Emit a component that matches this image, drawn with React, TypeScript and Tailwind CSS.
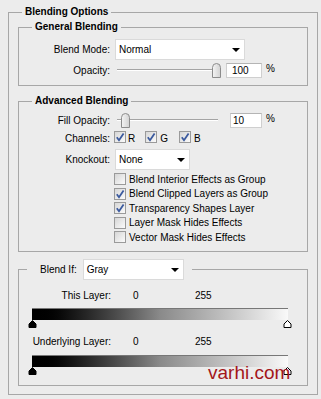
import React from "react";

// Photoshop-style "Blending Options" panel, grouped in etched fieldsets.

const FONT = "font-['Liberation_Sans',Arial,sans-serif]";

function Check({ on }: { on?: boolean }) {
  return (
    <span className="inline-flex h-[12px] w-[12px] shrink-0 items-center justify-center border border-[#9a9a9a] bg-linear-to-br from-[#d6d6d6] to-[#fbfbfb]">
      {on ? (
        <svg width="10" height="10" viewBox="0 0 10 10">
          <path d="M1.8 5.2 L4 8.2 L8.6 1.6" fill="none" stroke="#3b5a9e" strokeWidth="1.8" />
        </svg>
      ) : null}
    </span>
  );
}

function Select({ value, w }: { value: string; w: string }) {
  return (
    <div className={`relative flex h-[21px] items-center border border-[#dadada] bg-white pl-[3px] ${w}`}>
      <span>{value}</span>
      <svg className="absolute right-[4px] top-[8px]" width="8" height="4" viewBox="0 0 8 4">
        <path d="M0 0 H8 L4 4 Z" fill="#000" />
      </svg>
    </div>
  );
}

function Thumb({ left }: { left: string }) {
  return (
    <svg className={`absolute top-0 ${left}`} width="9" height="15" viewBox="0 0 9 15">
      <defs>
        <linearGradient id="tg" x1="0" x2="1" y1="0" y2="0">
          <stop offset="0" stopColor="#f4f4f4" />
          <stop offset="1" stopColor="#d2d2d2" />
        </linearGradient>
      </defs>
      <path d="M0.5 4.5 Q0.5 0.5 4.5 0.5 Q8.5 0.5 8.5 4.5 V14.5 H0.5 Z" fill="url(#tg)" stroke="#8c8c8c" />
    </svg>
  );
}

function Slider({ thumb }: { thumb: string }) {
  return (
    <div className="relative ml-[7px] h-[15px] w-[104px]">
      <div className="absolute left-0 top-[6px] h-[1px] w-[101px] bg-[#a4a4a4]" />
      <div className="absolute left-0 top-[7px] h-[1px] w-[101px] bg-white" />
      <Thumb left={thumb} />
    </div>
  );
}

function Marker({ dark, left }: { dark?: boolean; left: string }) {
  return (
    <svg className={`absolute top-0 ${left}`} width="9" height="8" viewBox="0 0 9 8">
      <path
        d="M4.5 0.5 L8 4 V7.5 H1 V4 Z"
        fill={dark ? "#000" : "#fff"}
        stroke="#000"
        strokeWidth="1"
      />
    </svg>
  );
}

function Ramp() {
  return (
    <>
      <div className="ml-[13px] h-[12px] w-[256px] border-t border-[#777] bg-linear-to-r from-black via-[#8a8a8a] to-[#f9f9f9]" />
      <div className="relative ml-[13px] h-[7px] w-[256px]">
        <Marker dark left="left-[-4px]" />
        <Marker left="left-[251px]" />
      </div>
    </>
  );
}

const Label = ({ children }: { children: React.ReactNode }) => (
  <span className="w-[91px] shrink-0 text-right">{children}</span>
);

export default function App() {
  return (
    <div className={`relative h-[399px] w-[321px] bg-[#ececec] pl-[8px] pt-[6px] text-[10px] text-black ${FONT}`}>
      <fieldset className="w-[310px] border border-[#a7a7a7] pb-[8px]">
        <legend className="ml-[13px] px-[3px] font-bold leading-[12px]">Blending Options</legend>

        <fieldset className="mx-[9px] mt-[3px] border border-[#a7a7a7] pb-[7px] pt-[6px]">
          <legend className="ml-[13px] px-[3px] font-bold leading-[12px]">General Blending</legend>
          <div className="flex h-[21px] items-center">
            <Label>Blend Mode:</Label>
            <div className="ml-[5px]">
              <Select value="Normal" w="w-[130px]" />
            </div>
          </div>
          <div className="mt-[3px] flex h-[15px] items-center">
            <Label>Opacity:</Label>
            <Slider thumb="left-[95px]" />
            <span className="ml-[5px] flex h-[15px] w-[36px] items-center border border-[#cfcfcf] border-t-[#b4b4b4] bg-white pl-[5px]">100</span>
            <span className="ml-[4px] -mt-[4px]">%</span>
          </div>
        </fieldset>

        <fieldset className="mx-[9px] mt-[9px] border border-[#a7a7a7] pb-[6px] pt-[6px]">
          <legend className="ml-[13px] px-[3px] font-bold leading-[12px]">Advanced Blending</legend>
          <div className="flex h-[15px] items-center">
            <Label>Fill Opacity:</Label>
            <Slider thumb="left-[4px]" />
            <span className="ml-[9px] flex h-[15px] w-[32px] items-center border border-[#cfcfcf] border-t-[#b4b4b4] bg-white pl-[2px]">10</span>
            <span className="ml-[4px] -mt-[4px]">%</span>
          </div>
          <div className="mt-[3px] flex h-[14px] items-center">
            <Label>Channels:</Label>
            <span className="ml-[4px]"><Check on /></span>
            <span className="ml-[2px]">R</span>
            <span className="ml-[10px]"><Check on /></span>
            <span className="ml-[3px]">G</span>
            <span className="ml-[11px]"><Check on /></span>
            <span className="ml-[3px]">B</span>
          </div>
          <div className="mt-[4px] flex h-[21px] items-center">
            <Label>Knockout:</Label>
            <div className="ml-[5px]">
              <Select value="None" w="w-[75px]" />
            </div>
          </div>
          <div className="mt-[2px] pl-[95px]">
            {[
              ["Blend Interior Effects as Group", false],
              ["Blend Clipped Layers as Group", true],
              ["Transparency Shapes Layer", true],
              ["Layer Mask Hides Effects", false],
              ["Vector Mask Hides Effects", false],
            ].map(([t, on]) => (
              <div key={t as string} className="flex h-[14.5px] items-center">
                <Check on={on as boolean} />
                <span className="ml-[3px]">{t as string}</span>
              </div>
            ))}
          </div>
        </fieldset>

        <fieldset className="mx-[9px] mt-[7px] border border-[#a7a7a7] pb-[11px] pt-[10px]">
          <legend className="ml-[8px] flex items-center pl-[13px] pr-[8px]">
            <span>Blend If:</span>
            <div className="ml-[6px]">
              <Select value="Gray" w="w-[101px]" />
            </div>
          </legend>
          <div className="flex leading-[12px]">
            <span className="w-[92px] text-right">This Layer:</span>
            <span className="ml-[22px] w-[62px]">0</span>
            <span>255</span>
          </div>
          <div className="mt-[6px]">
            <Ramp />
          </div>
          <div className="mt-[9px] flex leading-[12px]">
            <span className="w-[92px] text-right">Underlying Layer:</span>
            <span className="ml-[22px] w-[62px]">0</span>
            <span>255</span>
          </div>
          <div className="mt-[7px]">
            <Ramp />
          </div>
        </fieldset>
      </fieldset>

      <span className="absolute left-[208px] top-[363px] text-[19px] leading-[19px] text-[#a3171b]">varhi.com</span>
    </div>
  );
}
